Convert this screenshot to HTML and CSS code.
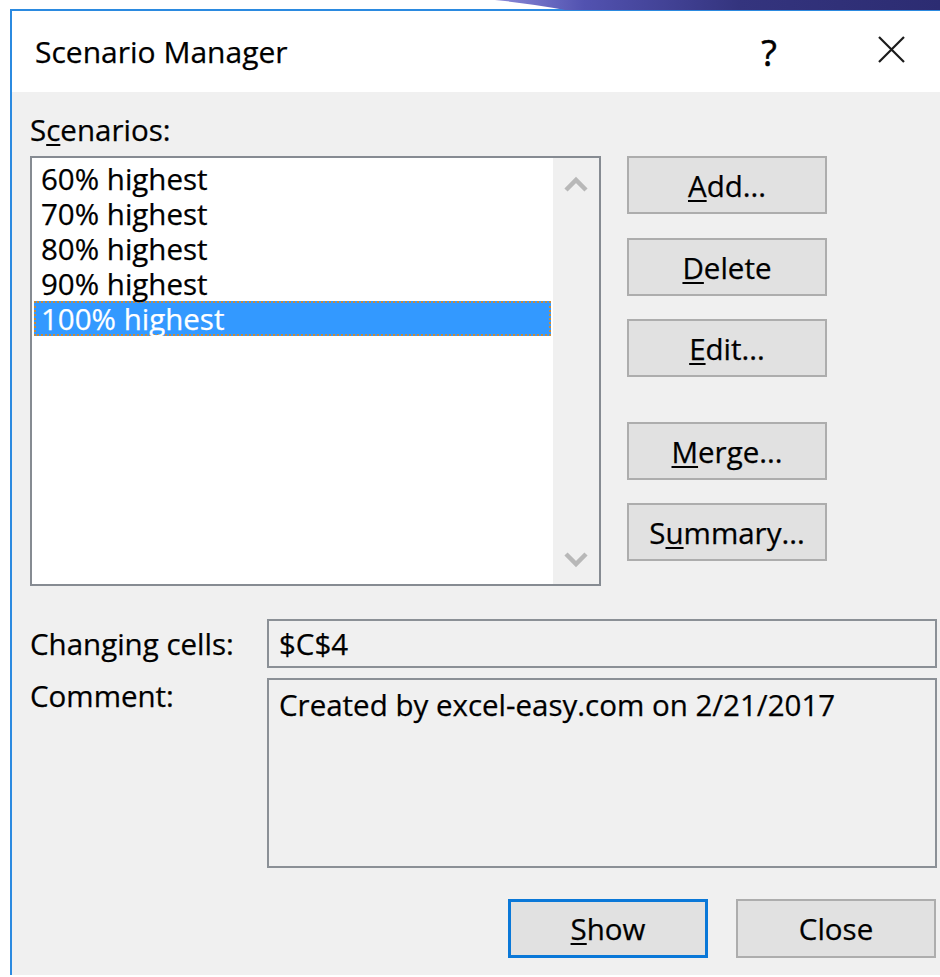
FILE: index.html
```html
<!DOCTYPE html>
<html lang="en">
<head>
<meta charset="utf-8">
<title>Scenario Manager</title>
<link rel="stylesheet" href="styles.css">
</head>
<body>
<svg class="swoosh" width="445" height="10" viewBox="0 0 445 10" aria-hidden="true">
  <defs>
    <linearGradient id="swooshFill" x1="0" y1="0" x2="1" y2="0">
      <stop offset="0" stop-color="#8a8ad8"/>
      <stop offset="0.2" stop-color="#5252b0"/>
      <stop offset="0.55" stop-color="#34347e"/>
      <stop offset="1" stop-color="#2c2c72"/>
    </linearGradient>
  </defs>
  <path d="M0 0 Q40 4 70 10 L445 10 L445 0 Z" fill="url(#swooshFill)"/>
</svg>

<div class="dialog">
  <div class="titlebar">
    <span class="title">Scenario Manager</span>
    <span class="help">?</span>
    <svg class="close-icon" width="27" height="27" viewBox="0 0 27 27" aria-hidden="true">
      <path d="M1 1 L26 26 M26 1 L1 26" stroke="#1b1b1b" stroke-width="2.2"/>
    </svg>
  </div>

  <div class="content">
    <div class="label">S<u>c</u>enarios:</div>

    <div class="main-row">
      <div class="listbox">
        <ul class="items">
          <li class="item">60% highest</li>
          <li class="item">70% highest</li>
          <li class="item">80% highest</li>
          <li class="item">90% highest</li>
          <li class="item selected">100% highest</li>
        </ul>
        <div class="scrollbar">
          <svg class="arrow" width="24" height="18" viewBox="0 0 24 18" aria-hidden="true">
            <path d="M2 15 L12 5 L22 15" fill="none" stroke="#b8b8b8" stroke-width="4.5"/>
          </svg>
          <svg class="arrow" width="24" height="18" viewBox="0 0 24 18" aria-hidden="true">
            <path d="M2 3 L12 13 L22 3" fill="none" stroke="#b8b8b8" stroke-width="4.5"/>
          </svg>
        </div>
      </div>

      <div class="side-buttons">
        <button class="btn"><u>A</u>dd...</button>
        <button class="btn"><u>D</u>elete</button>
        <button class="btn"><u>E</u>dit...</button>
        <button class="btn spaced"><u>M</u>erge...</button>
        <button class="btn">S<u>u</u>mmary...</button>
      </div>
    </div>

    <div class="fields">
      <div class="field-label center">Changing cells:</div>
      <div class="field single">$C$4</div>
      <div class="field-label">Comment:</div>
      <div class="field multi">Created by excel-easy.com on 2/21/2017</div>
    </div>

    <div class="footer">
      <button class="btn default"><u>S</u>how</button>
      <button class="btn">Close</button>
    </div>
  </div>
</div>
</body>
</html>
```

FILE: styles.css
```css
html, body {
  margin: 0;
  padding: 0;
  background: #ffffff;
  overflow: hidden;
  width: 940px;
  height: 977px;
}

body {
  position: relative;
  font-family: "Open Sans", "Noto Sans", sans-serif;
  font-size: 29.5px;
  line-height: 35px;
  color: #000000;
  -webkit-text-stroke: 0.25px #000000;
}

/* decorative band along the top edge */
.swoosh {
  position: absolute;
  top: 0;
  left: 495px;
  display: block;
}

.dialog {
  margin: 9px 0 0 10px;
  width: 930px;
  height: 966px;
  border-top: 2px solid #2b8ae0;
  border-left: 2px solid #2b8ae0;
  box-sizing: border-box;
  display: flex;
  flex-direction: column;
  background: #f0f0f0;
}

/* title bar */
.titlebar {
  height: 81px;
  background: #ffffff;
  display: flex;
  align-items: flex-start;
  padding: 23px 0 0 23px;
  box-sizing: border-box;
  flex-shrink: 0;
}

.title {
  font-size: 30px;
  line-height: 35px;
}

.help {
  margin-left: auto;
  width: 40px;
  text-align: center;
  font-size: 36px;
  line-height: 35px;
  margin-top: 1px;
  margin-right: 89px;
  -webkit-text-stroke: 0.6px #000000;
}

.close-icon {
  margin-top: 2px;
  margin-right: 35px;
  display: block;
}

/* dialog body */
.content {
  padding: 20px 0 0 18px;
}

u {
  text-decoration-thickness: 2px;
  text-underline-offset: 3px;
}

.main-row {
  display: flex;
  gap: 26px;
  margin-top: 9px;
}

.listbox {
  width: 571px;
  height: 430px;
  box-sizing: border-box;
  border: 2px solid #868b92;
  background: #ffffff;
  display: flex;
}

.items {
  list-style: none;
  margin: 0;
  padding: 3px 2px 0 2px;
  flex: 1;
}

.item {
  height: 35px;
  padding-left: 7px;
  box-sizing: border-box;
  white-space: nowrap;
}

.item.selected {
  background: #3399ff;
  color: #ffffff;
  -webkit-text-stroke: 0.25px #ffffff;
  border: 2px dotted #c68b3c;
  padding-left: 5px;
  line-height: 31px;
}

.scrollbar {
  width: 46px;
  background: #f0f0f0;
  display: flex;
  flex-direction: column;
  justify-content: space-between;
  align-items: center;
  padding: 17px 0 15px;
  box-sizing: border-box;
}

.arrow {
  display: block;
}

/* push buttons */
.btn {
  font: inherit;
  color: #000000;
  width: 200px;
  height: 58px;
  background: #e1e1e1;
  border: 2px solid #adadad;
  box-sizing: border-box;
  padding: 0;
  margin: 0;
  line-height: 35px;
  text-align: center;
}

.side-buttons {
  display: flex;
  flex-direction: column;
  gap: 23px;
}

.side-buttons .btn:nth-child(2) {
  margin-top: 1px;
}

.side-buttons .spaced {
  margin-top: 22px;
}

/* cells and comment */
.fields {
  display: grid;
  grid-template-columns: 237px 670px;
  row-gap: 10px;
  margin-top: 33px;
}

.field-label {
  white-space: nowrap;
}

.field-label.center {
  align-self: center;
}

.field {
  border: 2px solid #8b9096;
  box-sizing: border-box;
  background: #f0f0f0;
  padding-left: 10px;
}

.field.single {
  height: 49px;
  padding-top: 5px;
}

.field.multi {
  height: 190px;
  padding-top: 7px;
}

.footer {
  display: flex;
  gap: 28px;
  margin-top: 31px;
  padding-left: 478px;
}

.footer .btn {
  height: 59px;
}

.btn.default {
  border: 3px solid #0a78d8;
}
```
